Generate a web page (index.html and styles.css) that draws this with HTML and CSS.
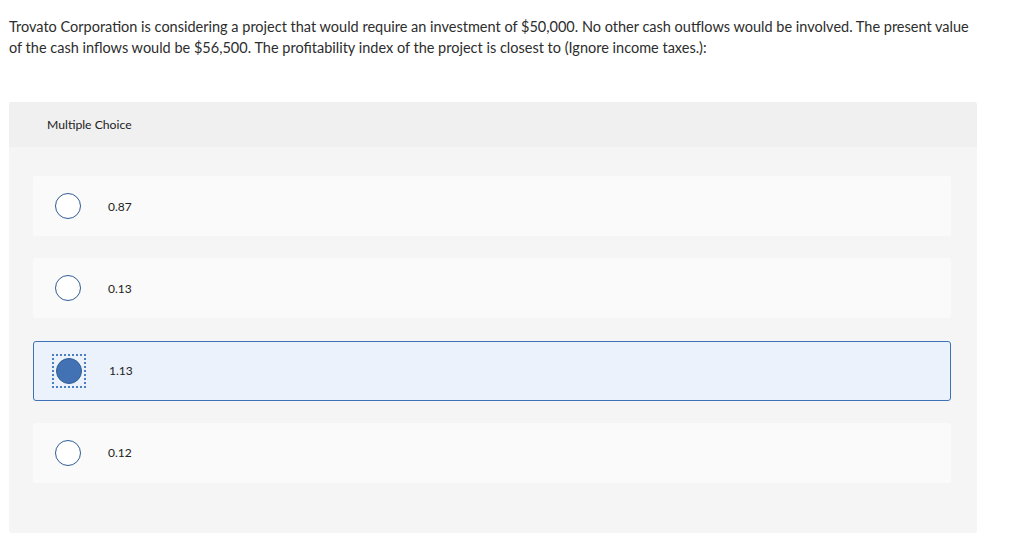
FILE: index.html
```html
<!DOCTYPE html>
<html>
<head>
<meta charset="utf-8">
<link rel="stylesheet" href="styles.css">
</head>
<body>
<div class="page">
  <p class="question">Trovato Corporation is considering a project that would require an investment of $50,000. No other cash outflows would be involved. The present value of the cash inflows would be $56,500. The profitability index of the project is closest to (Ignore income taxes.):</p>
  <div class="panel">
    <div class="panel-head">Multiple Choice</div>
    <div class="panel-body">
      <div class="option"><span class="radio"></span><span class="label">0.87</span></div>
      <div class="option"><span class="radio"></span><span class="label">0.13</span></div>
      <div class="option selected"><span class="focus"><span class="radio filled"></span></span><span class="label">1.13</span></div>
      <div class="option"><span class="radio"></span><span class="label">0.12</span></div>
    </div>
  </div>
</div>
</body>
</html>
```

FILE: styles.css
```css
html, body {
  margin: 0;
  padding: 0;
  background: #fff;
}
body {
  font-family: Lato, "Liberation Sans", sans-serif;
  color: #333;
}
.page {
  width: 1024px;
  height: 560px;
  padding: 16px 0 0 9px;
  box-sizing: border-box;
}
.question {
  margin: 0;
  width: 965px;
  font-size: 14.5px;
  line-height: 21px;
  color: #2d2d2d;
}
.panel {
  margin-top: 44px;
  width: 968px;
  height: 431px;
  background: #f5f5f5;
  border-radius: 3px;
  display: flex;
  flex-direction: column;
}
.panel-head {
  height: 45px;
  background: #f0f0f0;
  border-radius: 3px 3px 0 0;
  display: flex;
  align-items: center;
  padding-left: 38px;
  font-size: 12.2px;
  color: #222;
}
.panel-body {
  padding: 29px 26px 0 24px;
  display: flex;
  flex-direction: column;
  gap: 22.33px;
}
.option {
  height: 60px;
  background: #fafafa;
  display: flex;
  align-items: center;
  padding-left: 22px;
  box-sizing: border-box;
  border-radius: 2px;
}
.option.selected {
  background: #ecf2fb;
  border: 1px solid #3d72b8;
  border-radius: 3px;
  padding-left: 18px;
}
.radio {
  width: 24px;
  height: 24px;
  border: 1px solid #2f5d94;
  border-radius: 50%;
  background: #fff;
  flex: none;
}
.radio.filled {
  background: #4272b3;
  border-color: #2f5d94;
}
.focus {
  border: 2px dotted #4a7fc4;
  padding: 2px;
  display: flex;
  flex: none;
}
.label {
  margin-left: 27px;
  font-size: 12px;
  color: #222;
}
.selected .label {
  margin-left: 23px;
}
```
